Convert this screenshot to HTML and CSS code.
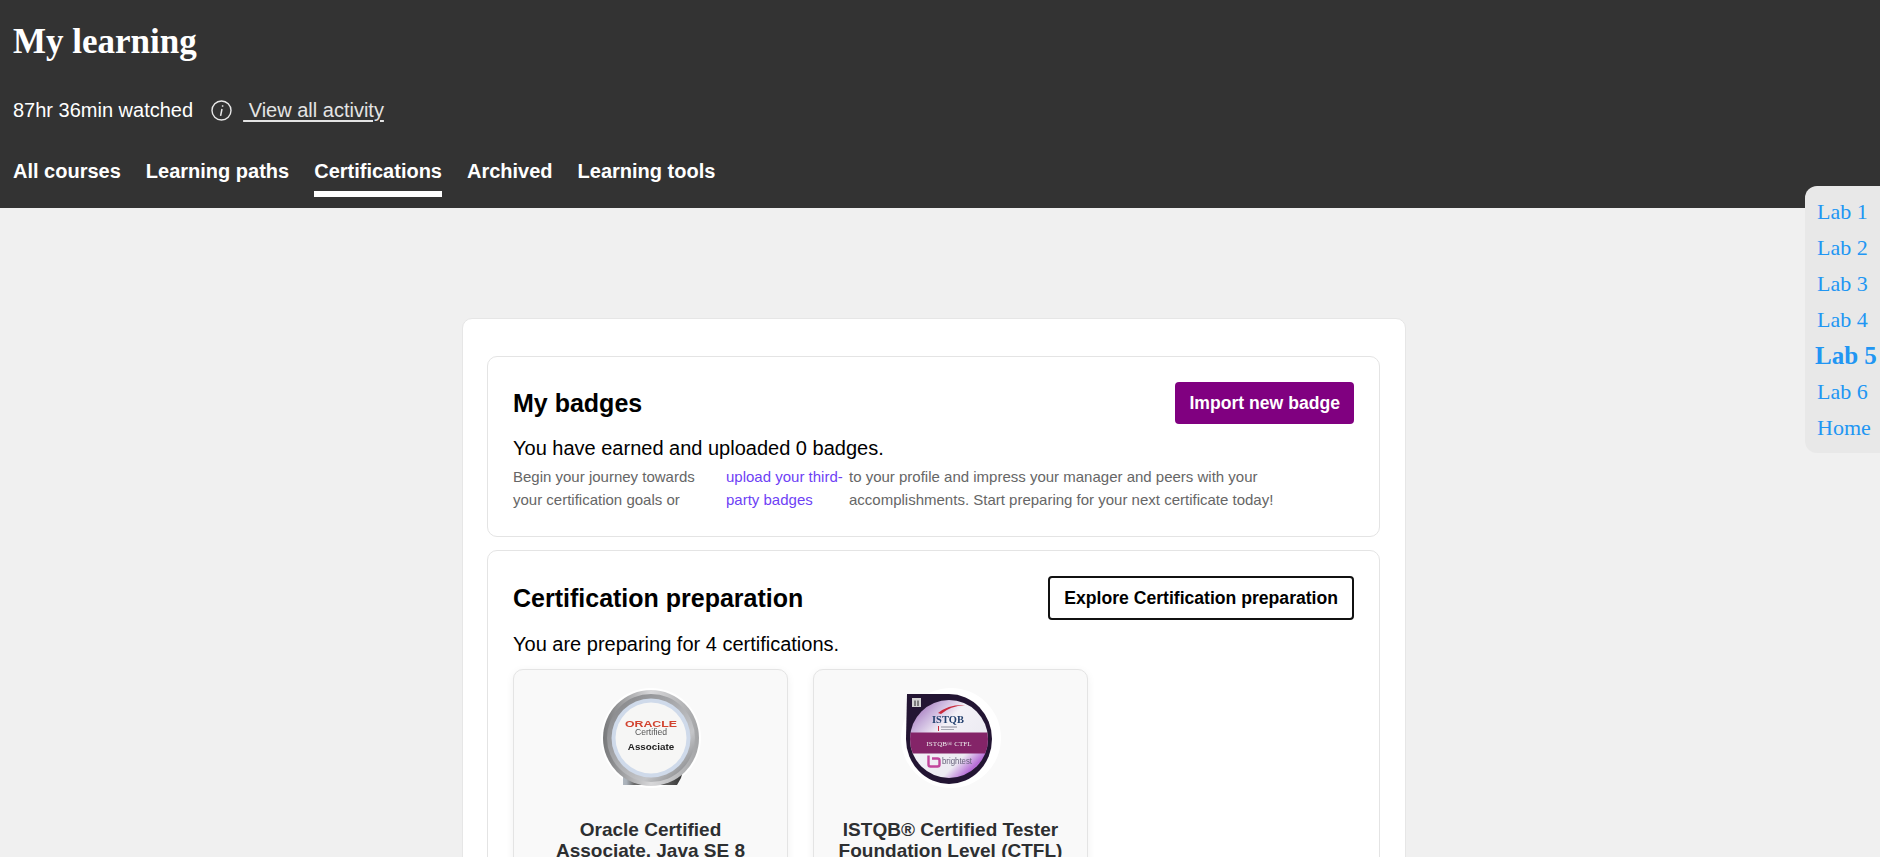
FILE: index.html
```html
<!DOCTYPE html>
<html lang="en">
<head>
<meta charset="utf-8">
<title>My learning</title>
<link rel="stylesheet" href="styles.css">
</head>
<body>
<header class="header">
  <h1 class="title">My learning</h1>
  <div class="stats">
    <span>87hr 36min watched</span>
    <svg class="info" viewBox="0 0 21 21" aria-hidden="true"><circle cx="10.500" cy="10.500" r="9.500" fill="none" stroke="#e8e8e8" stroke-width="1.400"/><path d="M11.600 5.300v1.500M11 9 9.600 15.800" fill="none" stroke="#e8e8e8" stroke-width="1.500"/></svg>
    <a class="activity" href="#">&nbsp;View all activity</a>
  </div>
  <nav class="tabs">
    <a class="tab" href="#">All courses</a>
    <a class="tab" href="#">Learning paths</a>
    <a class="tab active" href="#">Certifications</a>
    <a class="tab" href="#">Archived</a>
    <a class="tab" href="#">Learning tools</a>
  </nav>
</header>
<aside class="labs">
  <a href="#">Lab 1</a>
  <a href="#">Lab 2</a>
  <a href="#">Lab 3</a>
  <a href="#">Lab 4</a>
  <a href="#" class="current">Lab 5</a>
  <a href="#">Lab 6</a>
  <a href="#">Home</a>
</aside>
<main class="main">
  <div class="panel">
    <section class="card">
      <div class="card-head">
        <h2>My badges</h2>
        <a class="btn btn-primary" href="#">Import new badge</a>
      </div>
      <p class="lead">You have earned and uploaded 0 badges.</p>
      <div class="blurb">
        <span class="b1">Begin your journey towards your certification goals or</span>
        <a class="b2" href="#">upload your third-party badges</a>
        <span class="b3">to your profile and impress your manager and peers with your accomplishments. Start preparing for your next certificate today!</span>
      </div>
    </section>
    <section class="card">
      <div class="card-head">
        <h2>Certification preparation</h2>
        <a class="btn btn-outline" href="#">Explore Certification preparation</a>
      </div>
      <p class="lead">You are preparing for 4 certifications.</p>
      <div class="certs">
        <article class="cert">
          <svg class="badge" viewBox="0 0 100 100" aria-hidden="true">
            <defs>
              <linearGradient id="ring" x1="0" y1="0" x2="1" y2="1"><stop offset="0" stop-color="#7f8083"/><stop offset=".35" stop-color="#a0a1a4"/><stop offset=".7" stop-color="#c4c5c8"/><stop offset="1" stop-color="#6f7072"/></linearGradient>
              <linearGradient id="rim" x1="0" y1="0" x2="1" y2="0"><stop offset="0" stop-color="#77787a"/><stop offset=".5" stop-color="#d8d8da"/><stop offset="1" stop-color="#a3a4a6"/></linearGradient>
              <linearGradient id="foot" x1="0" x2="1" y1="0" y2="0"><stop offset="0" stop-color="#c3ccd6"/><stop offset=".2" stop-color="#a9b0b8"/><stop offset=".3" stop-color="#6a6a6a"/><stop offset=".75" stop-color="#5c5c5c"/><stop offset="1" stop-color="#2f2f2f"/></linearGradient>
            </defs>
            <circle cx="50" cy="50" r="50" fill="#fff"/>
            <path d="M11 76 L22 86 V97 H76 L80 90 L84 76Z" fill="url(#foot)"/>
            <circle cx="50" cy="50" r="48" fill="url(#rim)"/>
            <circle cx="50" cy="50" r="44" fill="url(#ring)"/>
            <circle cx="50" cy="50" r="39.500" fill="#cfdaea"/>
            <circle cx="50" cy="50" r="35.500" fill="#f6f6f5"/>
            <text x="50" y="38.500" class="bt-oracle" textLength="52" lengthAdjust="spacingAndGlyphs">ORACLE</text>
            <text x="50" y="47" class="bt-cert">Certified</text>
            <text x="50" y="62" class="bt-assoc">Associate</text>
          </svg>
          <h3>Oracle Certified Associate, Java SE 8</h3>
        </article>
        <article class="cert">
          <svg class="badge" viewBox="0 0 100 100" aria-hidden="true">
            <defs>
              <linearGradient id="foil" x1="0" y1="0" x2="1" y2="1"><stop offset="0" stop-color="#8d4fa8"/><stop offset=".22" stop-color="#c9b2dc"/><stop offset=".38" stop-color="#f3f1f7"/><stop offset=".7" stop-color="#ecebf2"/><stop offset=".84" stop-color="#b56ad6"/><stop offset=".92" stop-color="#f0e6f6"/><stop offset="1" stop-color="#dcc8ec"/></linearGradient>
              <clipPath id="disc"><circle cx="48" cy="51" r="39"/></clipPath>
            </defs>
            <circle cx="50" cy="50" r="50" fill="#fff"/>
            <path d="M6 6 H48 A43 45 0 1 1 5 51Z" fill="#231533"/>
            <circle cx="48" cy="51" r="39" fill="url(#foil)"/>
            <rect x="11" y="10" width="9" height="9" fill="#d4d4d4"/>
            <path d="M14 18V12.500M17 18V12.500" stroke="#444" stroke-width="1.200"/>
            <path d="M37 25 Q48 16 64 17 Q49 18 40 26Z" fill="#c9293c"/>
            <text x="47" y="35" class="bt-istqb" textLength="32" lengthAdjust="spacingAndGlyphs">ISTQB</text>
            <rect x="37" y="38" width="1" height="5" fill="#c9293c"/>
            <rect x="40" y="38.500" width="16" height="1" fill="#8a8a9a"/>
            <rect x="40" y="41" width="13" height="1" fill="#a8a8b4"/>
            <rect x="0" y="44.500" width="100" height="21" fill="#842468" clip-path="url(#disc)"/>
            <text x="48" y="58" class="bt-ctfl" textLength="45" lengthAdjust="spacingAndGlyphs">ISTQB&#174; CTFL</text>
            <path d="M27.500 67.500v9a2 2 0 0 0 2 2h7a2 2 0 0 0 2-2v-4a2 2 0 0 0-2-2h-5.500" fill="none" stroke="#c2459c" stroke-width="2.400"/>
            <text x="56" y="76" class="bt-bright" textLength="30" lengthAdjust="spacingAndGlyphs">brightest</text>
          </svg>
          <h3>ISTQB&#174; Certified Tester Foundation Level (CTFL)</h3>
        </article>
      </div>
    </section>
  </div>
</main>
</body>
</html>
```

FILE: styles.css
```css
* { box-sizing: border-box; }
html, body { margin: 0; height: 100%; overflow: hidden; }
body { background: #f0f0f0; font-family: "Liberation Sans", Arial, sans-serif; color: #000; }
a { text-decoration: none; }

.header { height: 208px; background: #333; color: #fff; padding: 21px 13px 0; display: flex; flex-direction: column; }
.title { margin: 0; font: bold 35px/42px "Liberation Serif", "Times New Roman", serif; }
.stats { margin-top: 35px; display: flex; align-items: center; font-size: 20px; line-height: 24px; }
.info { width: 21px; height: 21px; margin-left: 18px; }
.activity { margin-left: 11px; color: #e4e4e4; text-decoration: underline; text-decoration-thickness: 2px; text-underline-offset: 3px; }
.tabs { margin-top: 37px; display: flex; gap: 25px; }
.tab { color: #fff; font-weight: bold; font-size: 20px; line-height: 24px; padding-bottom: 8px; border-bottom: 6px solid transparent; }
.tab.active { border-bottom-color: #fff; }

.labs { position: fixed; top: 186px; right: 0; width: 75px; height: 267px; padding: 8px 0 0 12px; background: #e8e8e8; border-radius: 12px 0 0 12px; display: flex; flex-direction: column; font-family: "Liberation Serif", "Times New Roman", serif; font-size: 22px; line-height: 36px; white-space: nowrap; }
.labs a { color: #2196f3; }
.labs .current { font-weight: bold; font-size: 25px; margin-left: -2px; }

.main { padding: 110px 12px 0 0; display: flex; justify-content: center; }
.panel { width: 944px; flex: none; background: #fff; border: 1px solid #e6e6e6; border-radius: 10px; padding: 37px 25px 25px 24px; display: flex; flex-direction: column; gap: 13px; }
.card { border: 1px solid #e4e4e4; border-radius: 10px; padding: 25px; background: #fff; }
.card-head { display: flex; justify-content: space-between; align-items: center; }
.card h2 { margin: 0; font-size: 25px; line-height: 30px; font-weight: bold; }
.btn { font-size: 17.600px; font-weight: bold; line-height: 22px; border-radius: 4px; }
.btn-primary { background: #800080; color: #fff; padding: 10px 14px; }
.btn-outline { background: #fff; color: #000; border: 2px solid #111; padding: 9px 14px; }
.lead { margin: 12px 0 0; font-size: 20px; line-height: 24px; }
.blurb { display: flex; margin-top: 5px; font-size: 15px; line-height: 23px; color: #666; width: 764px; }
.b1 { width: 213px; flex: none; }
.b2 { width: 123px; flex: none; color: #6e3ff5; }
.b3 { flex: 1; }

.certs { display: flex; gap: 25px; margin-top: 13px; }
.cert { width: 275px; height: 300px; background: #f9f9f9; border: 1px solid #e4e4e4; border-radius: 10px; box-shadow: 0 2px 8px rgba(0,0,0,.06); padding: 18px 20px 0; text-align: center; }
.badge { display: block; width: 100px; height: 100px; margin: 0 auto; filter: blur(.4px); }
.cert h3 { margin: 31px 0 0; font-size: 19px; line-height: 21px; font-weight: bold; color: #2d2f31; }

.bt-oracle { font: bold 8.500px "Liberation Sans", sans-serif; fill: #d2432f; text-anchor: middle; }
.bt-cert { font: 8.600px "Liberation Sans", sans-serif; fill: #555; text-anchor: middle; }
.bt-assoc { font: bold 9.800px "Liberation Sans", sans-serif; fill: #222; text-anchor: middle; }
.bt-istqb { font: bold 10px "Liberation Serif", serif; fill: #24416f; text-anchor: middle; }
.bt-ctfl { font: 7px "Liberation Serif", serif; fill: #eee; text-anchor: middle; }
.bt-bright { font: 9px "Liberation Sans", sans-serif; fill: #66607a; text-anchor: middle; }
```
